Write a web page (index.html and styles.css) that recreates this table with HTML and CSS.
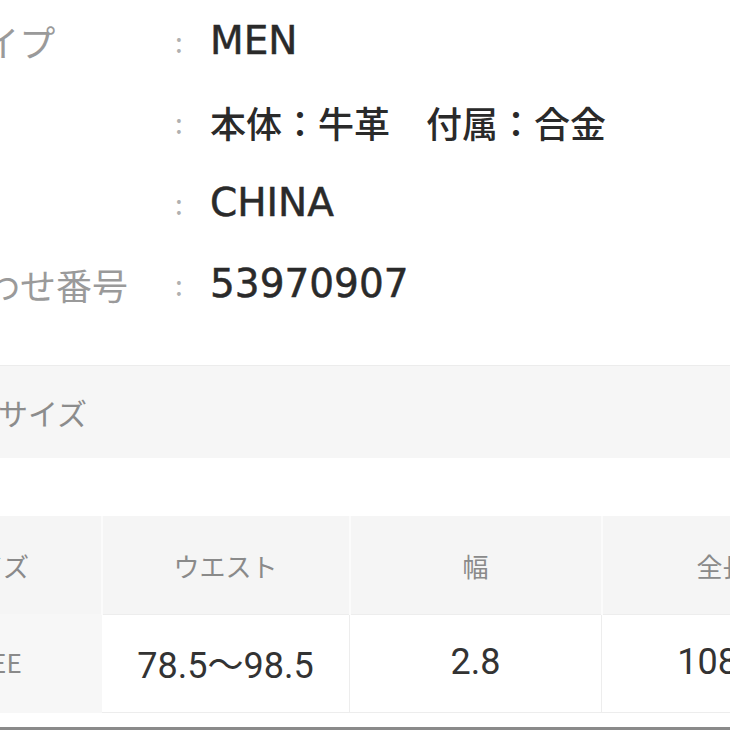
FILE: index.html
```html
<!DOCTYPE html>
<html lang="ja">
<head>
  <meta charset="UTF-8">
  <meta name="viewport" content="width=device-width, initial-scale=1.0">
  <title>商品詳細</title>
  <link rel="stylesheet" href="styles.css">
</head>
<body>
  <div class="page">
    <dl class="spec">
      <div class="spec-row">
        <dt>ユーザタイプ</dt>
        <dd><span class="sep">:</span>MEN</dd>
      </div>
      <div class="spec-row">
        <dt>素材</dt>
        <dd class="ja"><span class="sep">:</span>本体：牛革　付属：合金</dd>
      </div>
      <div class="spec-row">
        <dt>原産国</dt>
        <dd><span class="sep">:</span>CHINA</dd>
      </div>
      <div class="spec-row">
        <dt>お問い合わせ番号</dt>
        <dd><span class="sep">:</span>53970907</dd>
      </div>
    </dl>

    <div class="size-title">商品のサイズ</div>

    <table class="size-table">
      <tr>
        <th>サイズ</th>
        <th>ウエスト</th>
        <th>幅</th>
        <th>全長</th>
      </tr>
      <tr>
        <td class="size-name">FREE</td>
        <td>78.5〜98.5</td>
        <td>2.8</td>
        <td>108.5</td>
      </tr>
    </table>
  </div>
  <div class="bottom-bar"></div>
</body>
</html>
```

FILE: styles.css
```css
html, body {
  margin: 0;
  height: 730px;
  overflow: hidden;
  background-color: #fff;
}
body {
  display: flex;
  flex-direction: column;
  font-family: 'Noto Sans CJK JP', 'Noto Sans', sans-serif;
}
.page {
  flex: 1;
  margin-left: -160px; /* 左側は画面外にはみ出している */
  width: 1100px;
}
.spec {
  margin: 0;
}
.spec-row {
  display: flex;
  align-items: center;
  height: 81px;
}
.spec dt {
  width: 335px;
  font-size: 36px;
  color: #9a9a9a;
  white-space: nowrap;
}
.spec dd {
  margin: 0;
  display: flex;
  align-items: center;
  font-family: 'DejaVu Sans', 'Noto Sans CJK JP', sans-serif;
  font-size: 39px;
  color: #2a2a2a;
  -webkit-text-stroke: 0.5px #2a2a2a;
  white-space: nowrap;
}
.spec dd.ja {
  font-family: 'Noto Sans CJK JP', sans-serif;
  font-size: 36px;
  font-weight: 500;
  -webkit-text-stroke: 0;
}
.sep {
  width: 35px;
  font-family: 'Noto Sans CJK JP', sans-serif;
  font-size: 28px;
  font-weight: 400;
  color: #b0b0b0;
  -webkit-text-stroke: 0;
}
.size-title {
  margin-top: 41px;
  height: 92px;
  display: flex;
  align-items: center;
  padding-left: 68px;
  border-top: 1px solid #ececec;
  background-color: #f6f6f6;
  font-size: 30px;
  color: #8c8c8c;
}
.size-table {
  margin-top: 58px;
  margin-left: 40px;
  border-collapse: collapse;
}
.size-table th {
  height: 98px;
  padding: 0;
  background-color: #f5f5f5;
  border-right: 2px solid #fbfbfb;
  font-size: 26px;
  font-weight: 400;
  color: #8a8a8a;
}
.size-table th:first-child { width: 220px; }
.size-table th:nth-child(2) { width: 246px; }
.size-table th:nth-child(3) { width: 250px; }
.size-table th:nth-child(4) { width: 240px; }
.size-table td {
  height: 93px;
  padding: 0 0 4px;
  text-align: center;
  border: 1px solid #ededed;
  font-family: Roboto, 'Noto Sans CJK JP', sans-serif;
  font-size: 36px;
  color: #333;
}
.size-table td.size-name {
  background-color: #f7f7f7;
  border-color: #f7f7f7;
  font-family: 'Noto Sans CJK JP', sans-serif;
  font-size: 26px;
  color: #8a8a8a;
}
.bottom-bar {
  height: 3px;
  background-color: #8a8a8a;
}
```
